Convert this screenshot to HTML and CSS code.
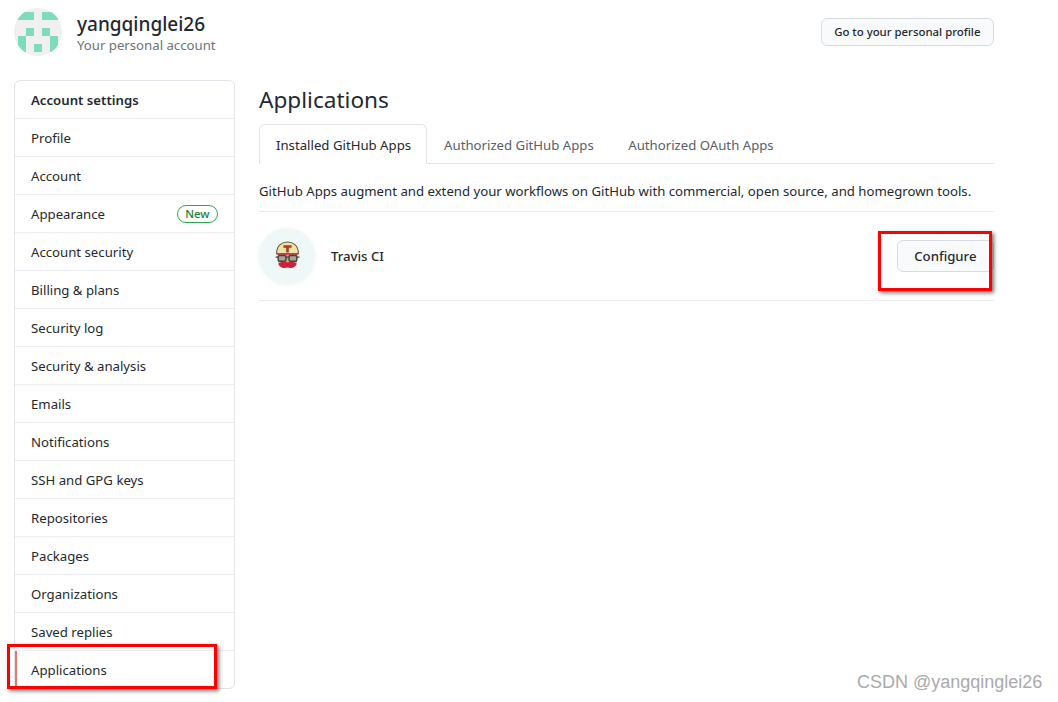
FILE: index.html
```html
<!DOCTYPE html>
<html lang="en">
<head>
<meta charset="utf-8">
<title>Applications</title>
<link rel="stylesheet" href="styles.css">
</head>
<body>
<div class="page">
  <header class="head">
    <div class="who">
      <svg class="avatar" viewBox="0 0 48 48" aria-hidden="true">
        <defs><clipPath id="c"><circle cx="24" cy="24" r="24"/></clipPath></defs>
        <g clip-path="url(#c)">
          <rect width="48" height="48" fill="#f0f0f0"/>
          <g fill="#7fdcbb">
            <rect x="4" y="4" width="16" height="8"/><rect x="28" y="4" width="16" height="8"/>
            <rect x="12" y="20" width="8" height="8"/><rect x="28" y="20" width="8" height="8"/>
            <rect x="4" y="28" width="8" height="16"/><rect x="36" y="28" width="8" height="16"/>
            <rect x="20" y="36" width="8" height="8"/>
          </g>
        </g>
      </svg>
      <div>
        <div class="name">yangqinglei26</div>
        <div class="sub">Your personal account</div>
      </div>
    </div>
    <a class="btn btn-sm">Go to your personal profile</a>
  </header>
  <div class="cols">
    <nav class="side">
      <div class="item title">Account settings</div>
      <div class="item">Profile</div>
      <div class="item">Account</div>
      <div class="item between">Appearance <span class="new">New</span></div>
      <div class="item">Account security</div>
      <div class="item">Billing &amp; plans</div>
      <div class="item">Security log</div>
      <div class="item">Security &amp; analysis</div>
      <div class="item">Emails</div>
      <div class="item">Notifications</div>
      <div class="item">SSH and GPG keys</div>
      <div class="item">Repositories</div>
      <div class="item">Packages</div>
      <div class="item">Organizations</div>
      <div class="item">Saved replies</div>
      <div class="item current">Applications</div>
    </nav>
    <main class="main">
      <h1 class="h1">Applications</h1>
      <div class="tabs">
        <a class="tab on">Installed GitHub Apps</a>
        <a class="tab">Authorized GitHub Apps</a>
        <a class="tab">Authorized OAuth Apps</a>
      </div>
      <p class="intro">GitHub Apps augment and extend your workflows on GitHub with commercial, open source, and homegrown tools.</p>
      <div class="app">
        <div class="logo">
          <svg class="logo-art" viewBox="0 0 24 27" aria-hidden="true">
            <path d="M3 20c0 4 5 6 9 6s9-2 9-6v-8H3z" fill="#c9a596"/>
            <path d="M1.500 12C1.500 4 7 1 12 1s10.500 3 10.500 11z" fill="#efe3a0" stroke="#5f5a48" stroke-width="1"/>
            <path d="M8 4h8v2.500h-2.700V11h-2.600V6.500H8z" fill="#b7362f"/>
            <path d="M1.500 12.500h21" stroke="#c43e55" stroke-width="1.800"/>
            <rect x="3" y="14" width="7.500" height="5.500" rx="1.500" fill="#a8a596" stroke="#45443c" stroke-width="1.400"/>
            <rect x="13.500" y="14" width="7.500" height="5.500" rx="1.500" fill="#a8a596" stroke="#45443c" stroke-width="1.400"/>
            <path d="M10.500 15.500h3M3 15.500H.5M21 15.500h2.500" stroke="#45443c" stroke-width="1.300"/>
            <path d="M3 22c3-2.500 7-2.500 9-1.200 2-1.300 6-1.300 9 1.200-1 2.800-4 4.500-6 4l-3-.7-3 .7c-2 .5-5-1.200-6-4z" fill="#cf2138"/>
          </svg>
        </div>
        <div class="app-name">Travis CI</div>
        <a class="btn btn-md">Configure</a>
      </div>
    </main>
  </div>
</div>
<div class="mark mark-apps"></div>
<div class="mark mark-conf"></div>
<div class="csdn">CSDN @yangqinglei26</div>
</body>
</html>
```
FILE: styles.css
```css
* { box-sizing: border-box; }
html, body { margin: 0; padding: 0; background: #fff; }
body { font-family: "Noto Sans", "Open Sans", sans-serif; font-size: 13.2px; color: #24292f; height: 702px; overflow: hidden; position: relative; }
.page { width: 980px; margin-left: 14px; padding-top: 8px; }
.head { display: flex; justify-content: space-between; align-items: flex-start; height: 72px; }
.who { display: flex; gap: 15px; }
.avatar { width: 48px; height: 48px; display: block; }
.name { font-size: 19px; font-weight: 500; line-height: 28px; margin-top: 2px; }
.sub { font-size: 13.2px; line-height: 16px; margin-top: -1px; color: #6a737d; }
.btn { display: block; border: 1px solid #d8dce1; border-radius: 6px; background: #f9fafb; font-weight: 500; white-space: nowrap; }
.btn-sm { font-size: 11.4px; line-height: 26px; padding: 0 12.5px; margin-top: 10px; height: 28px; }
.btn-md { font-size: 13.2px; line-height: 30px; height: 32px; padding: 0 16.5px; margin-left: auto; }
.cols { display: flex; gap: 24px; }
.side { width: 221px; border: 1px solid #e1e4e8; border-radius: 6px; height: 609px; flex: none; }
.item { height: 38px; padding: 0 16px; display: flex; align-items: center; border-bottom: 1px solid #eaecef; line-height: 20px; }
.item:last-child { border-bottom: 0; }
.item.title { font-weight: 600; }
.between { justify-content: space-between; }
.new { border: 1px solid #2da44e; color: #1a7f37; border-radius: 10px; font-size: 11.4px; font-weight: 500; line-height: 16px; padding: 0 7.5px; height: 18px; }
.current { position: relative; }
.current::before { content: ""; position: absolute; left: 0; top: 0; bottom: 0; width: 2px; background: #e9776b; }
.main { width: 735px; flex: none; }
.h1 { font-size: 22.6px; font-weight: 400; line-height: 36px; margin: 2px 0 6px; }
.tabs { display: flex; height: 40px; border-bottom: 1px solid #e1e4e8; }
.tab { height: 40px; padding: 0 17.5px 0 17px; line-height: 42px; color: #586069; }
.tab.on { color: #24292f; background: #fff; border: 1px solid #e1e4e8; border-bottom: 0; border-radius: 6px 6px 0 0; padding: 0 15px 0 16px; line-height: 41px; }
.intro { margin: 0; height: 48px; line-height: 55px; border-bottom: 1px solid #eaecef; white-space: nowrap; }
.app { display: flex; align-items: center; height: 89px; border-bottom: 1px solid #eaecef; }
.logo { width: 56px; height: 56px; border-radius: 50%; background: #eff7f9; box-shadow: 0 1px 4px rgba(60,100,110,.08); display: flex; align-items: center; justify-content: center; padding-bottom: 2px; }
.logo-art { width: 27px; height: 28px; display: block; }
.app-name { margin-left: 16px; font-weight: 500; }
.mark { position: absolute; border: 3px solid #f00; box-shadow: 2px 2px 4px rgba(0,0,0,.55); }
.mark-apps { left: 7px; top: 644px; width: 210px; height: 45px; }
.mark-conf { left: 878px; top: 231px; width: 114px; height: 60px; }
.csdn { position: absolute; left: 857px; top: 671px; font-family: "Liberation Sans", sans-serif; font-size: 18px; line-height: 22px; color: #aaa; }
```
